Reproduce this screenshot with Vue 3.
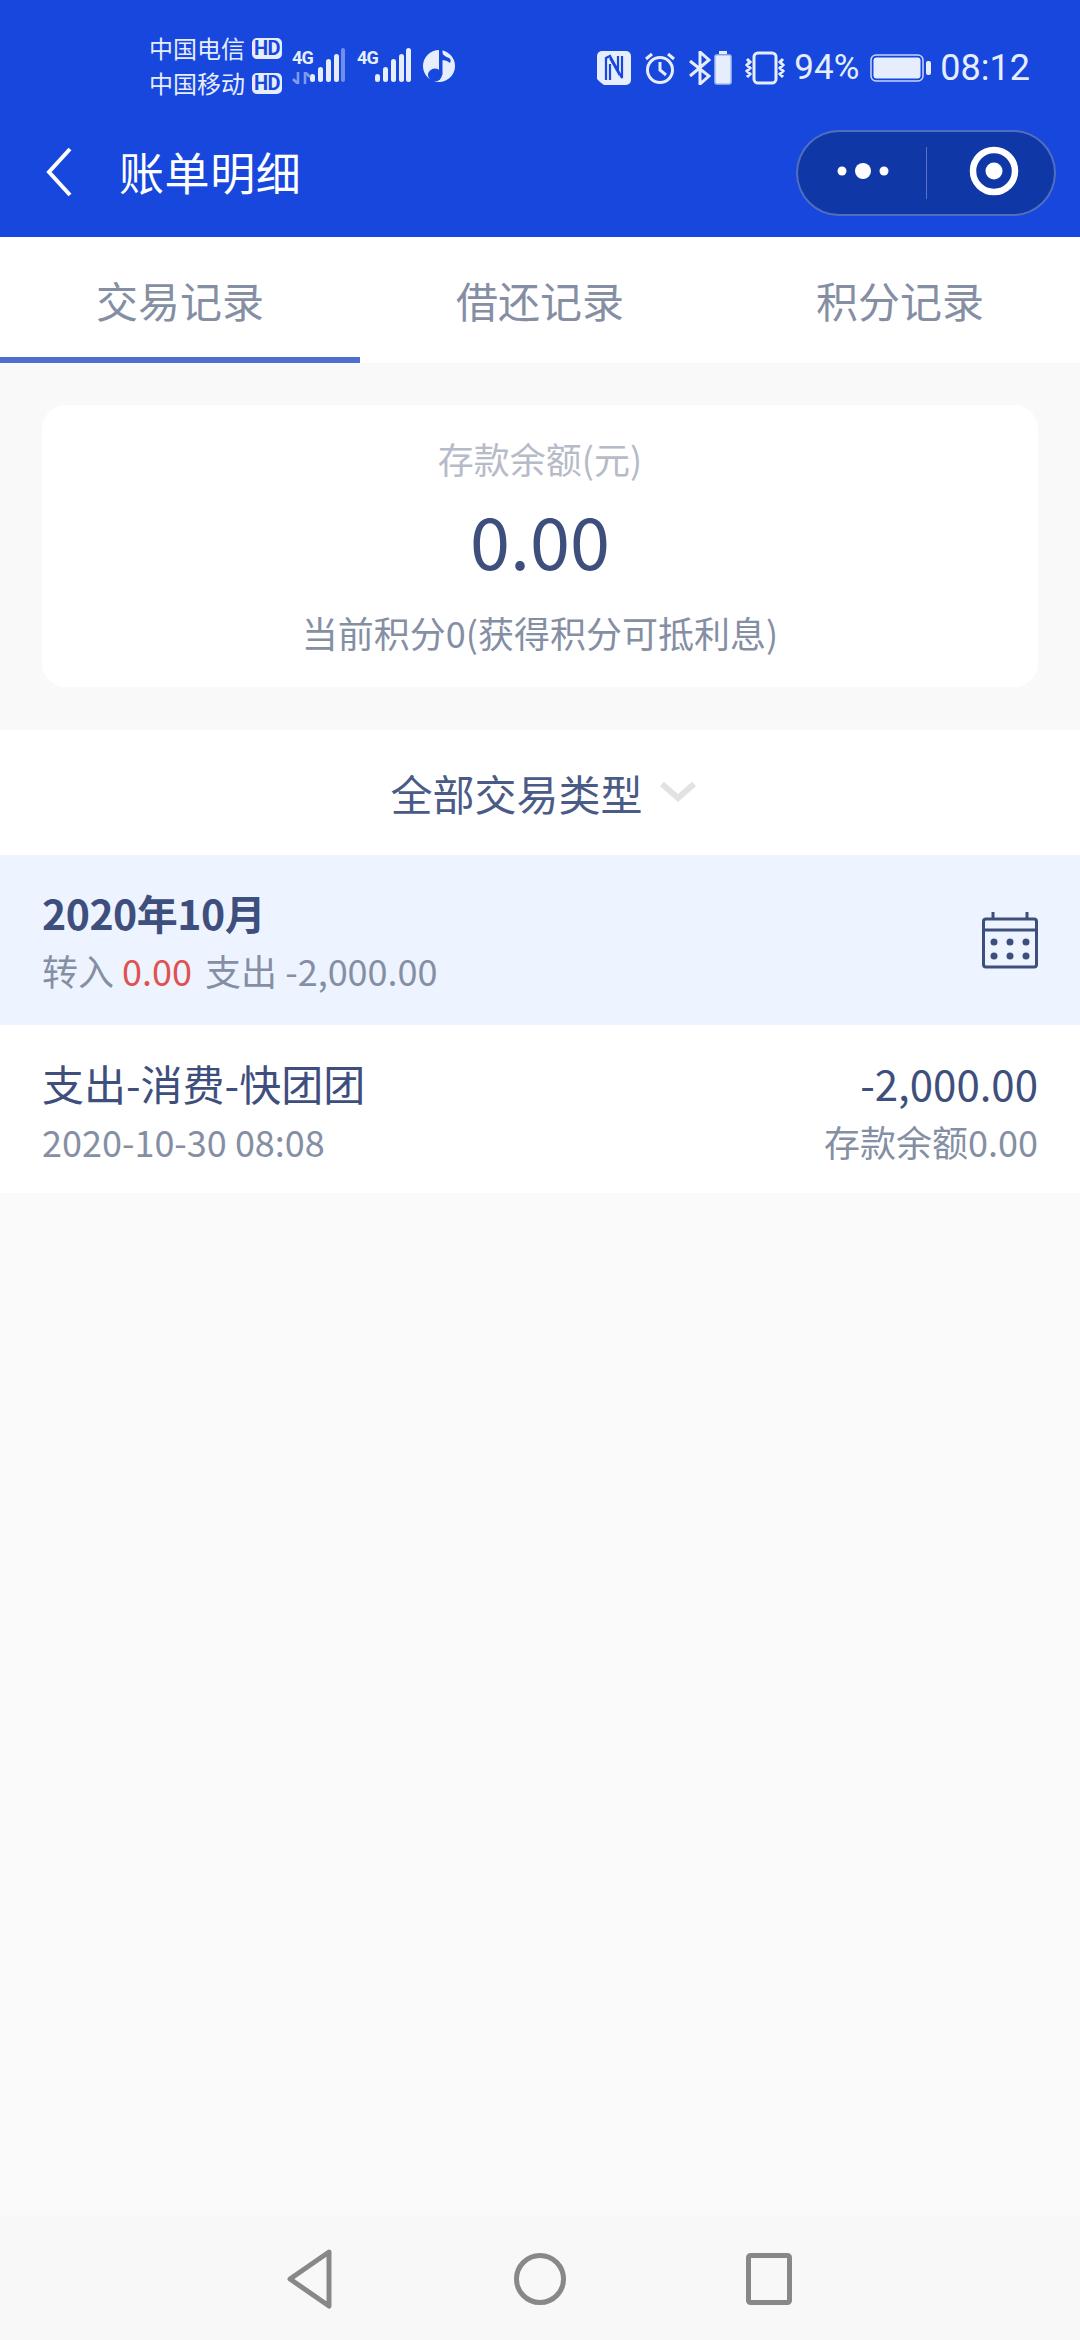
<script setup>
const tabs = ['交易记录', '借还记录', '积分记录']
</script>

<template>
  <div class="page">
    <header class="top">
      <div class="status">
        <div class="carriers">
          <div class="carrier"><span>中国电信</span><b class="hd">HD</b></div>
          <div class="carrier"><span>中国移动</span><b class="hd">HD</b></div>
        </div>
        <div class="net first">
          <span class="g">4G</span>
          <svg class="arrows" width="20" height="12" viewBox="0 0 20 12"><path d="M6 0v12M1 7l5 5M13 12V0M13 0l5 5" fill="none" stroke="#7f9bed" stroke-width="2.600"/></svg>
          <svg width="36" height="36" viewBox="0 0 36 36"><g fill="#e6edfd"><rect x="0" y="26" width="5" height="8" rx="2.500"/><rect x="8" y="19" width="5" height="15" rx="2.500"/><rect x="16" y="11" width="5" height="23" rx="2.500"/><rect x="24" y="6" width="5" height="28" rx="2.500"/></g><rect x="31" y="0" width="4" height="34" rx="2" fill="#6f8fea"/></svg>
        </div>
        <div class="net second">
          <span class="g">4G</span>
          <svg width="36" height="36" viewBox="0 0 36 36"><g fill="#e6edfd"><rect x="0" y="26" width="5" height="8" rx="2.500"/><rect x="8" y="19" width="5" height="15" rx="2.500"/><rect x="16" y="11" width="5" height="23" rx="2.500"/><rect x="24" y="6" width="5" height="28" rx="2.500"/><rect x="31" y="0" width="5" height="34" rx="2.500"/></g></svg>
        </div>
        <svg class="globe" width="32" height="34" viewBox="0 0 32 34"><circle cx="16" cy="17" r="16" fill="#e6edfd"/><ellipse cx="12" cy="26" rx="7" ry="6.500" fill="#1747dc"/><rect x="16" y="1" width="3.500" height="25" fill="#1747dc"/><path d="M18 1c1 5 5 7 8 8 2 1 2 3 1 5 -2-2-5-3-9-3z" fill="#1747dc"/></svg>

        <div class="right">
          <svg width="34" height="34" viewBox="0 0 34 34"><path d="M5 0h24a5 5 0 0 1 5 5v24a5 5 0 0 1-5 5H7l-4-3-3-3V5a5 5 0 0 1 5-5z" fill="#e6edfd"/><path d="M9 29V7l4-2 12 22 0-22M13 29V13M21 5v16L13 7" fill="none" stroke="#1747dc" stroke-width="2.200"/></svg>
          <svg class="ml13" width="32" height="34" viewBox="0 0 32 34"><circle cx="16" cy="19" r="12.500" fill="none" stroke="#e6edfd" stroke-width="3"/><path d="M16 11v8l6 5M2 8l6-5M30 8l-6-5" fill="none" stroke="#e6edfd" stroke-width="3"/></svg>
          <svg class="ml13" width="22" height="34" viewBox="0 0 22 34"><path d="M1 10l19 15-9 8V1l9 8L1 25" fill="none" stroke="#e6edfd" stroke-width="3"/></svg>
          <svg class="ml3" width="18" height="34" viewBox="0 0 18 34"><rect x="5" y="0" width="8" height="3" fill="#e6edfd"/><rect x="1" y="4" width="16" height="29" rx="2" fill="#e6edfd" stroke="#a8bcf4" stroke-width="1.500"/></svg>
          <svg class="ml12" width="42" height="34" viewBox="0 0 42 34"><rect x="10" y="2" width="22" height="30" rx="4" fill="none" stroke="#e6edfd" stroke-width="3"/><path d="M3 8l3 3-3 3 3 3-3 3 3 3-3 3M39 8l-3 3 3 3-3 3 3 3-3 3 3 3" fill="none" stroke="#e6edfd" stroke-width="3"/></svg>
          <span class="pct">94%</span>
          <svg class="ml11" width="61" height="28" viewBox="0 0 61 28"><rect x="1" y="1" width="52" height="26" rx="5" fill="none" stroke="#c8d5f8" stroke-width="1.500"/><rect x="3.500" y="3.500" width="47" height="21" rx="3" fill="#e6edfd"/><rect x="56" y="7" width="5" height="14" rx="2" fill="#e6edfd"/></svg>
          <span class="time">08:12</span>
        </div>
      </div>
      <div class="nav">
        <svg class="back" width="26" height="50" viewBox="0 0 26 50"><path d="M24 2L3 25l21 23" fill="none" stroke="#fff" stroke-width="4"/></svg>
        <h1 class="title">账单明细</h1>
        <div class="capsule">
          <svg width="100" height="86" viewBox="0 0 100 86"><circle cx="44" cy="41" r="4.500" fill="#fff"/><circle cx="65" cy="41" r="8" fill="#fff"/><circle cx="86" cy="41" r="4.500" fill="#fff"/></svg>
          <i class="divider"></i>
          <svg width="130" height="86" viewBox="0 0 130 86"><circle cx="67" cy="41" r="21" fill="none" stroke="#fff" stroke-width="6.500"/><circle cx="67" cy="41" r="8.500" fill="#fff"/></svg>
        </div>
      </div>
    </header>

    <nav class="tabs">
      <div v-for="(t, i) in tabs" :key="t" class="tab" :class="{ on: i === 0 }">{{ t }}</div>
    </nav>

    <section class="card-wrap">
      <div class="card">
        <div class="c-label">存款余额(元)</div>
        <div class="c-value">0.00</div>
        <div class="c-note">当前积分0(获得积分可抵利息)</div>
      </div>
    </section>

    <div class="filter">
      <span>全部交易类型</span>
      <svg width="36" height="22" viewBox="0 0 36 22"><path d="M2 3l16 14L34 3" fill="none" stroke="#e2e2e2" stroke-width="6"/></svg>
    </div>

    <div class="month">
      <div>
        <div class="m-title">2020年10月</div>
        <div class="m-sub">转入 <em>0.00</em> 支出 -2,000.00</div>
      </div>
      <svg width="56" height="58" viewBox="0 0 56 58"><g fill="none" stroke="#3f4f7d" stroke-width="3"><rect x="1.500" y="8" width="53" height="48" rx="2.500"/><path d="M1 19h54M11 1v8M45 1v8"/></g><g fill="#3f4f7d"><circle cx="12" cy="31" r="3.500"/><circle cx="28" cy="31" r="3.500"/><circle cx="44" cy="31" r="3.500"/><circle cx="12" cy="45" r="3.500"/><circle cx="28" cy="45" r="3.500"/><circle cx="44" cy="45" r="3.500"/></g></svg>
    </div>

    <div class="row">
      <div>
        <div class="r-title">支出-消费-快团团</div>
        <div class="r-sub">2020-10-30 08:08</div>
      </div>
      <div class="r-right">
        <div class="r-title">-2,000.00</div>
        <div class="r-sub">存款余额0.00</div>
      </div>
    </div>

    <div class="spacer"></div>

    <footer class="sysnav">
      <svg width="46" height="60" viewBox="0 0 46 60"><path d="M42 3L3 30l39 27z" fill="none" stroke="#888" stroke-width="5" stroke-linejoin="round"/></svg>
      <svg width="52" height="52" viewBox="0 0 52 52"><circle cx="26" cy="26" r="23.500" fill="none" stroke="#888" stroke-width="5"/></svg>
      <svg width="46" height="52" viewBox="0 0 46 52"><rect x="2.500" y="2.500" width="41" height="47" rx="2" fill="none" stroke="#888" stroke-width="5"/></svg>
    </footer>
  </div>
</template>

<style>
html, body { margin: 0; background: #fafafa; }
</style>

<style scoped>
.page {
  width: 1080px;
  height: 2340px;
  display: flex;
  flex-direction: column;
  background: #fafafa;
  font-family: "Noto Sans CJK SC", "Noto Sans", sans-serif;
  color: #3f4f7d;
  overflow: hidden;
}
.top { height: 237px; background: #1747dc; color: #e6edfd; flex: none; }
.status {
  height: 102px;
  padding: 32px 50px 0 149px;
  box-sizing: border-box;
  display: flex;
  align-items: flex-start;
}
.carriers { width: 133px; display: flex; flex-direction: column; gap: 3px; }
.carrier { display: flex; align-items: center; gap: 7px; height: 32px; font-size: 24px; line-height: 32px; white-space: nowrap; }
.hd {
  background: #e6edfd; color: #1747dc; border-radius: 5px; flex: none;
  width: 30px; height: 21px; text-align: center;
  font: 700 20px/21px "Roboto", sans-serif; letter-spacing: -.5px;
}
.net { position: relative; display: flex; align-items: flex-end; height: 52px; }
.net .g { font: 700 18px/16px "Roboto", sans-serif; letter-spacing: -.8px; color: #e6edfd; margin-bottom: 18px; }
.first { width: 65px; margin-left: 10px; }
.first .g { width: 20px; }
.first .arrows { position: absolute; left: 0; bottom: 0; }
.first svg:last-child { margin-left: -2px; }
.second { width: 54px; }
.second .g { width: 18px; }
.globe { margin-left: 12px; margin-top: 17px; }
.right { margin-left: auto; margin-top: 18px; display: flex; align-items: center; height: 36px; }
.ml3 { margin-left: 3px; }
.ml11 { margin-left: 11px; }
.ml12 { margin-left: 12px; }
.ml13 { margin-left: 13px; }
.pct { margin-left: 8px; font: 400 35px/36px "Roboto", sans-serif; width: 65px; white-space: nowrap; }
.time { margin-left: 9px; font: 400 36px/36px "Roboto", sans-serif; white-space: nowrap; }
.nav { height: 135px; display: flex; align-items: center; padding: 0 24px 0 46px; }
.back { flex: none; margin-top: 4px; }
.title { margin: 4px 0 0 47px; font-size: 45px; font-weight: 400; color: #fff; line-height: 60px; letter-spacing: .6px; }
.capsule {
  margin-left: auto; width: 260px; height: 86px; box-sizing: border-box;
  border: 2px solid rgba(255, 255, 255, .28); border-radius: 43px;
  background: #0f37a6; display: flex; align-items: center; margin-top: 6px;
}
.capsule svg { flex: none; }
.divider { width: 1px; height: 52px; background: rgba(255, 255, 255, .3); flex: none; margin-left: 28px; }
.tabs { height: 126px; background: #fff; display: flex; flex: none; }
.tab {
  flex: 1; text-align: center; font-size: 42px; line-height: 126px; color: #858fa4;
  box-sizing: border-box; height: 126px;
}
.tab.on { border-bottom: 6px solid #4f6fd0; }
.card-wrap { padding: 42px 42px 43px; background: #f9f9f9; flex: none; }
.card {
  height: 282px; background: #fff; border-radius: 24px; text-align: center;
  display: flex; flex-direction: column; align-items: center; box-sizing: border-box; padding-top: 29px;
}
.c-label { font-size: 36px; line-height: 48px; color: #b6bbc8; }
.c-value { font-size: 72px; line-height: 92px; color: #3f4f7d; margin-top: 11px; }
.c-note { font-size: 36px; line-height: 50px; color: #858fa4; margin-top: 22px; }
.filter {
  height: 125px; background: #fff; flex: none; display: flex; align-items: center; justify-content: center; gap: 17px;
  font-size: 42px; color: #4a5b88; padding-left: 6px;
}
.filter svg { margin-top: -2px; }
.month {
  height: 170px; background: #edf4ff; flex: none; display: flex; align-items: center; justify-content: space-between;
  padding: 0 42px; box-sizing: border-box;
}
.m-title { font-size: 41px; font-weight: 700; line-height: 58px; letter-spacing: -.5px; color: #3f4f7d; margin-top: -2px; }
.m-sub { font-size: 36px; line-height: 52px; color: #858fa4; margin-top: 3px; white-space: nowrap; }
.m-sub em { font-style: normal; color: #e0514f; margin-right: 5px; }
.row {
  height: 168px; background: #fff; flex: none; display: flex; justify-content: space-between; align-items: center;
  padding: 0 42px; box-sizing: border-box;
}
.r-title { font-size: 42px; line-height: 58px; color: #3f4f7d; white-space: nowrap; }
.r-sub { font-size: 36px; line-height: 52px; color: #858fa4; white-space: nowrap; margin-top: 3px; margin-bottom: -3px; }
.r-right { text-align: right; }
.spacer { flex: 1; background: #fafafa; }
.sysnav {
  height: 123px; flex: none; background: #f8f8f8; display: flex; align-items: center; box-sizing: border-box;
  padding: 0 288px 0 287px; justify-content: space-between;
}
</style>
